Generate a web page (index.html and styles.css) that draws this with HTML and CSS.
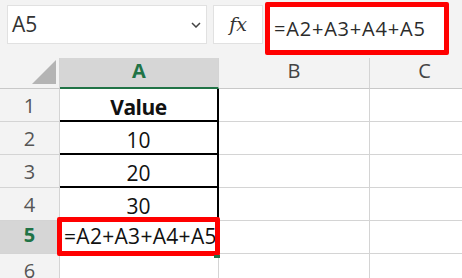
FILE: index.html
```html
<!DOCTYPE html>
<html>
<head>
<meta charset="utf-8">
<link rel="stylesheet" href="styles.css">
</head>
<body>
<div class="app">
  <div class="toolbar">
    <div class="namebox">
      <span class="name">A5</span>
      <svg class="chev" width="10" height="6" viewBox="0 0 10 6"><path d="M1 1 L5 5 L9 1" fill="none" stroke="#444" stroke-width="1.5"/></svg>
    </div>
    <div class="fxbox"><span class="fx">fx</span></div>
    <div class="formula">=A2+A3+A4+A5</div>
  </div>
  <div class="sheet">
    <div class="corner"><div class="tri"></div></div>
    <div class="colhead selcol">A</div>
    <div class="colhead">B</div>
    <div class="colhead">C</div>

    <div class="rowhead">1</div>
    <div class="cell boxed bold">Value</div>
    <div class="cell"></div>
    <div class="cell"></div>

    <div class="rowhead">2</div>
    <div class="cell boxed">10</div>
    <div class="cell"></div>
    <div class="cell"></div>

    <div class="rowhead">3</div>
    <div class="cell boxed">20</div>
    <div class="cell"></div>
    <div class="cell"></div>

    <div class="rowhead">4</div>
    <div class="cell boxed">30</div>
    <div class="cell"></div>
    <div class="cell"></div>

    <div class="rowhead selrow">5</div>
    <div class="cell active"><span class="ftext">=A2+A3+A4+A5</span><span class="handle"></span></div>
    <div class="cell"></div>
    <div class="cell"></div>

    <div class="rowhead">6</div>
    <div class="cell"></div>
    <div class="cell"></div>
    <div class="cell"></div>
  </div>
</div>
</body>
</html>
```
FILE: styles.css
```css
html, body {
  margin: 0;
  padding: 0;
  background: #f3f3f3;
}
body {
  width: 462px;
  height: 278px;
  overflow: hidden;
  font-family: "Open Sans", "Noto Sans", sans-serif;
}
.app {
  width: 462px;
}
.toolbar {
  height: 58px;
  box-sizing: border-box;
  display: flex;
  align-items: flex-start;
  padding: 5px 0 0 7px;
}
.namebox {
  width: 200px;
  height: 39px;
  box-sizing: border-box;
  background: #fff;
  border: 1px solid #e1e1e1;
  display: flex;
  align-items: center;
  justify-content: space-between;
  padding: 0 5px 0 4px;
}
.name {
  font-size: 21px;
  color: #333;
  line-height: 20px;
  margin-top: -1px;
}
.fxbox {
  width: 50px;
  height: 39px;
  box-sizing: border-box;
  margin-left: 6px;
  background: #fff;
  border: 1px solid #e1e1e1;
  display: flex;
  align-items: center;
  justify-content: center;
}
.fx {
  font-family: "DejaVu Serif", "Liberation Serif", serif;
  font-style: italic;
  font-size: 19px;
  color: #333;
  margin-top: -1px;
}
.formula {
  margin-left: 2px;
  margin-top: -3px;
  width: 184px;
  height: 53px;
  box-sizing: border-box;
  border: 5px solid #ff0000;
  border-radius: 2px;
  background: #fff;
  font-size: 20px;
  letter-spacing: 0.8px;
  color: #2b2b2b;
  line-height: 20px;
  padding: 12px 0 0 4px;
  white-space: nowrap;
}
.sheet {
  display: grid;
  grid-template-columns: 60px 159px 151px 110px;
  grid-template-rows: 31px repeat(6, 33px);
  background: #fff;
}
.corner {
  background: #f3f3f3;
  border-bottom: 1px solid #c8c8c8;
  border-right: 1px solid #d4d4d4;
  position: relative;
}
.tri {
  position: absolute;
  left: 32px;
  top: 2px;
  width: 24px;
  height: 24px;
  background: #b4b4b4;
  clip-path: polygon(100% 0, 100% 100%, 0 100%);
}
.colhead {
  background: #f3f3f3;
  border-bottom: 1px solid #c8c8c8;
  border-right: 1px solid #d4d4d4;
  display: flex;
  align-items: flex-end;
  justify-content: center;
  font-size: 20px;
  line-height: 20px;
  padding-bottom: 7px;
  box-sizing: border-box;
  color: #444;
}
.colhead.selcol {
  background: #d6d6d6;
  border-bottom: 2px solid #217346;
  padding-bottom: 6px;
  color: #217346;
  font-weight: 700;
}
.rowhead {
  background: #f3f3f3;
  border-bottom: 1px solid #d4d4d4;
  border-right: 1px solid #d4d4d4;
  display: flex;
  align-items: flex-end;
  justify-content: center;
  font-size: 20px;
  line-height: 20px;
  padding-bottom: 5px;
  box-sizing: border-box;
  color: #555;
}
.rowhead.selrow {
  background: #d6d6d6;
  color: #217346;
  font-weight: 700;
  padding-bottom: 8px;
}
.cell {
  border-bottom: 1px solid #d4d4d4;
  border-right: 1px solid #d4d4d4;
  display: flex;
  align-items: flex-end;
  justify-content: center;
  font-size: 21px;
  line-height: 20px;
  padding-bottom: 4px;
  box-sizing: border-box;
  color: #111;
  white-space: nowrap;
}
.cell.boxed {
  border-bottom: 2px solid #000;
  border-right: 2px solid #000;
  padding-bottom: 3px;
}
.cell.bold {
  font-weight: 700;
  letter-spacing: -0.5px;
}
.cell.active {
  position: relative;
  border-right: 2px solid #000;
  justify-content: flex-start;
  padding-left: 4px;
  padding-bottom: 7px;
}
.ftext {
  letter-spacing: 0.3px;
}
.cell.active::after {
  content: "";
  position: absolute;
  left: -3px;
  top: -4px;
  right: -3px;
  bottom: -3px;
  border: 5px solid #ff0000;
  border-radius: 2px;
}
.handle {
  position: absolute;
  right: -3px;
  bottom: -5px;
  width: 6px;
  height: 3px;
  background: #217346;
  z-index: 2;
}
```
